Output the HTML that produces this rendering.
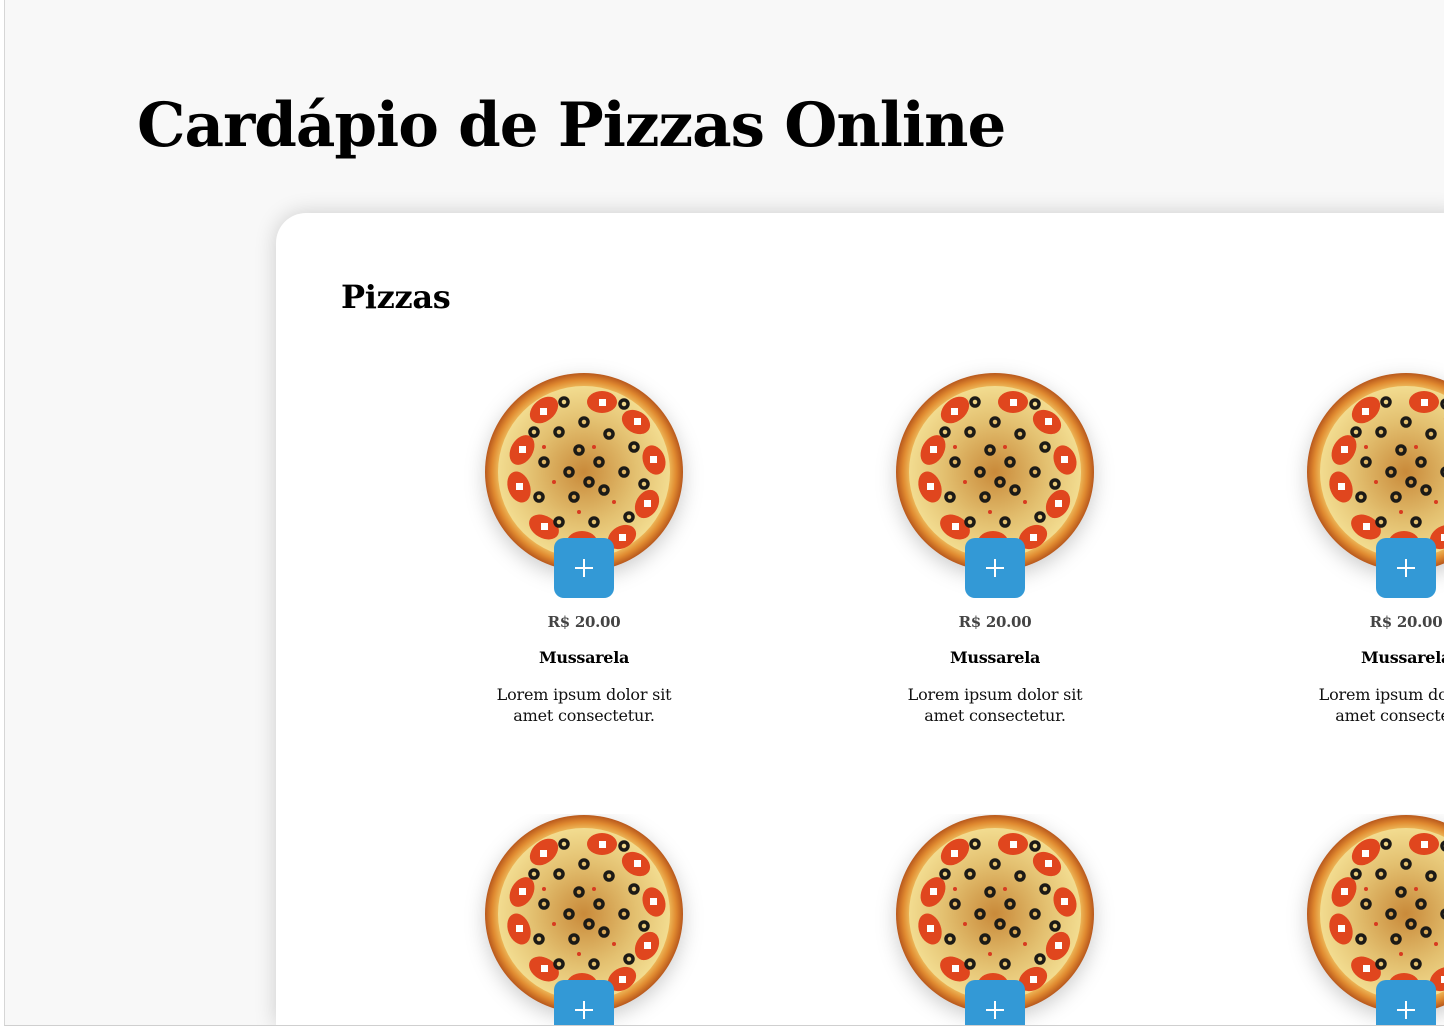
<!DOCTYPE html>
<html><head><meta charset="utf-8"><style>
*{margin:0;padding:0;box-sizing:border-box}
body{width:1448px;height:1032px;background:#fff;position:relative;overflow:hidden;font-family:"DejaVu Serif",serif}
#frame{position:absolute;left:4px;top:0;width:1440px;height:1026px;background:#f8f8f8;border-left:1px solid #d6d6d6;border-bottom:1px solid #cfcfcf;overflow:hidden}
h1{position:absolute;left:132px;top:90px;font-size:61px;line-height:72px;font-weight:bold;color:#000;letter-spacing:-1px;white-space:nowrap}
#card{position:absolute;left:271px;top:213px;width:1200px;height:812px;background:#fff;border-radius:30px 30px 0 0;box-shadow:0 0 22px rgba(0,0,0,0.18);overflow:hidden}
h2{position:absolute;left:65px;top:64px;font-size:32px;line-height:40px;font-weight:bold;color:#000;letter-spacing:-0.3px}
.item{position:absolute;width:260px;height:360px;text-align:center}
.item svg{position:absolute;left:30px;top:0;filter:drop-shadow(0 6px 10px rgba(0,0,0,0.2))}
.btn{position:absolute;left:100px;top:166px;width:60px;height:60px;background:#3399d6;border-radius:10px}
.btn:before,.btn:after{content:"";position:absolute;background:#fff;left:21px;top:29px;width:18px;height:2px}
.btn:after{left:29px;top:21px;width:2px;height:18px}
.price{position:absolute;top:240px;left:0;width:260px;font-size:15px;line-height:20px;font-weight:bold;color:#444;letter-spacing:-0.3px}
.name{position:absolute;top:276px;left:0;width:260px;font-size:16px;line-height:20px;font-weight:bold;color:#000;letter-spacing:-0.3px}
.desc{position:absolute;top:312px;left:28px;width:204px;font-size:16px;line-height:21px;color:#111;letter-spacing:-0.2px}
</style></head><body>
<svg width="0" height="0" style="position:absolute">
<defs>
<radialGradient id="cr" cx="50%" cy="50%" r="50%"><stop offset="85%" stop-color="#f0c060"/><stop offset="93%" stop-color="#e08a30"/><stop offset="100%" stop-color="#b8581c"/></radialGradient>
<radialGradient id="ch" cx="50%" cy="50%" r="50%"><stop offset="0%" stop-color="#c98a3a"/><stop offset="60%" stop-color="#e3c070"/><stop offset="100%" stop-color="#f2dc90"/></radialGradient>
<symbol id="pz" viewBox="0 0 200 200">
<circle cx="100" cy="100" r="99" fill="url(#cr)"/>
<circle cx="100" cy="100" r="86" fill="url(#ch)"/>
<g fill="#e0461e">
<ellipse cx="60" cy="38" rx="16" ry="11" transform="rotate(-40 60 38)"/>
<ellipse cx="118" cy="30" rx="15" ry="11"/>
<ellipse cx="152" cy="50" rx="15" ry="11" transform="rotate(30 152 50)"/>
<ellipse cx="170" cy="88" rx="15" ry="11" transform="rotate(70 170 88)"/>
<ellipse cx="163" cy="132" rx="15" ry="11" transform="rotate(-60 163 132)"/>
<ellipse cx="138" cy="165" rx="15" ry="11" transform="rotate(-30 138 165)"/>
<ellipse cx="98" cy="170" rx="15" ry="11"/>
<ellipse cx="60" cy="155" rx="16" ry="11" transform="rotate(30 60 155)"/>
<ellipse cx="35" cy="115" rx="16" ry="11" transform="rotate(70 35 115)"/>
<ellipse cx="38" cy="78" rx="16" ry="11" transform="rotate(-60 38 78)"/>
</g>
<g fill="#fff"><rect x="56" y="36" width="7" height="7"/><rect x="115" y="27" width="7" height="7"/><rect x="150" y="46" width="7" height="7"/><rect x="166" y="84" width="7" height="7"/><rect x="160" y="128" width="7" height="7"/><rect x="135" y="162" width="7" height="7"/><rect x="95" y="166" width="7" height="7"/><rect x="57" y="151" width="7" height="7"/><rect x="32" y="111" width="7" height="7"/><rect x="35" y="74" width="7" height="7"/></g>
<g fill="none" stroke="#1c1a16" stroke-width="3.5">
<circle cx="80" cy="30" r="4"/><circle cx="140" cy="32" r="4"/><circle cx="100" cy="50" r="4"/><circle cx="75" cy="60" r="4"/><circle cx="125" cy="62" r="4"/><circle cx="150" cy="75" r="4"/><circle cx="60" cy="90" r="4"/><circle cx="95" cy="78" r="4"/><circle cx="115" cy="90" r="4"/><circle cx="85" cy="100" r="4"/><circle cx="140" cy="100" r="4"/><circle cx="55" cy="125" r="4"/><circle cx="90" cy="125" r="4"/><circle cx="120" cy="118" r="4"/><circle cx="145" cy="145" r="4"/><circle cx="75" cy="150" r="4"/><circle cx="110" cy="150" r="4"/><circle cx="105" cy="110" r="4"/><circle cx="50" cy="60" r="4"/><circle cx="160" cy="112" r="4"/>
</g>
<g fill="#d83a20"><circle cx="110" cy="75" r="2"/><circle cx="70" cy="110" r="2"/><circle cx="130" cy="130" r="2"/><circle cx="95" cy="140" r="2"/><circle cx="60" cy="75" r="2"/></g>
</symbol></defs></svg>
<div id="frame">
<h1>Cardápio de Pizzas Online</h1>
<div id="card">
<h2>Pizzas</h2>
<div class="item" style="left:178px;top:159px"><svg width="200" height="200"><use href="#pz"/></svg><div class="btn"></div><div class="price">R$ 20.00</div><div class="name">Mussarela</div><div class="desc">Lorem ipsum dolor sit amet consectetur.</div></div>
<div class="item" style="left:589px;top:159px"><svg width="200" height="200"><use href="#pz"/></svg><div class="btn"></div><div class="price">R$ 20.00</div><div class="name">Mussarela</div><div class="desc">Lorem ipsum dolor sit amet consectetur.</div></div>
<div class="item" style="left:1000px;top:159px"><svg width="200" height="200"><use href="#pz"/></svg><div class="btn"></div><div class="price">R$ 20.00</div><div class="name">Mussarela</div><div class="desc">Lorem ipsum dolor sit amet consectetur.</div></div>
<div class="item" style="left:178px;top:601px;height:211px;overflow:hidden"><svg width="200" height="200"><use href="#pz"/></svg><div class="btn"></div></div>
<div class="item" style="left:589px;top:601px;height:211px;overflow:hidden"><svg width="200" height="200"><use href="#pz"/></svg><div class="btn"></div></div>
<div class="item" style="left:1000px;top:601px;height:211px;overflow:hidden"><svg width="200" height="200"><use href="#pz"/></svg><div class="btn"></div></div>
</div>
</div>
</body></html>
